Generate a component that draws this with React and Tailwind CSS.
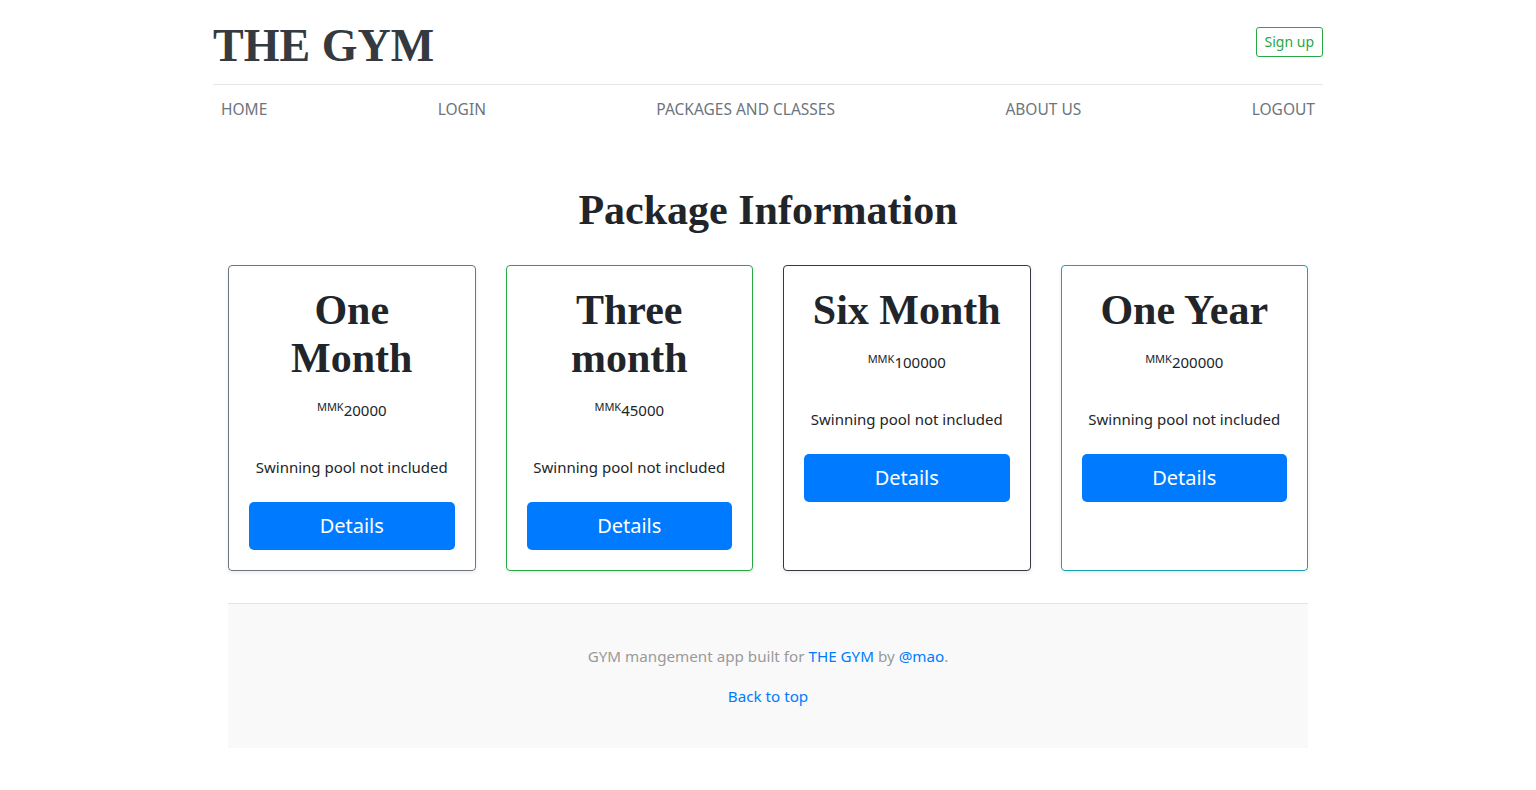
import React from "react";

const cards = [
  { title: ["One", "Month"], price: "20000", border: "border-[#6c757d]" },
  { title: ["Three", "month"], price: "45000", border: "border-[#28a745]" },
  { title: ["Six Month"], price: "100000", border: "border-[#343a40]" },
  { title: ["One Year"], price: "200000", border: "border-[#17a2b8]" },
];

const serif = "font-['Liberation_Serif',serif]";

export default function App() {
  return (
    <div className="min-h-[790px] bg-white font-['Noto_Sans',sans-serif] text-[16px] text-[#212529]">
      <div className="mx-auto w-[1110px]">
        <header className="flex h-[85px] items-center justify-between border-b border-[#e5e5e5]">
          <a className={`${serif} mt-[7px] text-[46px] font-bold leading-none text-[#343a40]`}>THE GYM</a>
          <a className="rounded-[3px] border border-[#28a745] px-[8px] py-[3px] text-[14px] leading-[22px] text-[#28a745]">
            Sign up
          </a>
        </header>
        <nav className="flex justify-between py-[4px] text-[15.5px] text-[#6c757d]">
          {["HOME", "LOGIN", "PACKAGES AND CLASSES", "ABOUT US", "LOGOUT"].map((t) => (
            <a key={t} className="p-[8px] leading-[24px]">
              {t}
            </a>
          ))}
        </nav>
      </div>

      <main className="mx-auto w-[1080px]">
        <h1 className={`${serif} mt-[53px] text-center text-[42px] font-bold leading-[48px] text-[#212529]`}>
          Package Information
        </h1>
        <div className="mt-[31px] grid grid-cols-4 gap-[30px]">
          {cards.map((c, i) => (
            <div
              key={i}
              className={`h-[306px] rounded-[4px] border ${c.border} bg-white p-[20px] text-center shadow-[0_2px_4px_rgba(0,0,0,0.075)]`}
            >
              <h2 className={`${serif} text-[42px] font-bold leading-[48px] text-[#212529]`}>
                {c.title.map((l) => (
                  <div key={l}>{l}</div>
                ))}
              </h2>
              <div className="mt-[16px] leading-[24px]">
                <sup className="text-[11px] text-[#212529]">MMK</sup>
                <span className="text-[15px]">{c.price}</span>
              </div>
              <p className="mt-[33px] text-[15px] leading-[24px]">Swinning pool not included</p>
              <button className="mt-[23px] h-[48px] w-full rounded-[5px] bg-[#007bff] text-[20px] text-white">
                Details
              </button>
            </div>
          ))}
        </div>

        <footer className="mt-[32px] border-t border-[#e5e5e5] bg-[#f9f9f9] py-[40px] text-center text-[15.2px] text-[#999]">
          <p className="leading-[24px]">
            GYM mangement app built for <a className="text-[#007bff]">THE GYM</a> by{" "}
            <a className="text-[#007bff]">@mao</a>.
          </p>
          <p className="mt-[16px] leading-[24px]">
            <a className="text-[#007bff]">Back to top</a>
          </p>
        </footer>
      </main>
    </div>
  );
}
